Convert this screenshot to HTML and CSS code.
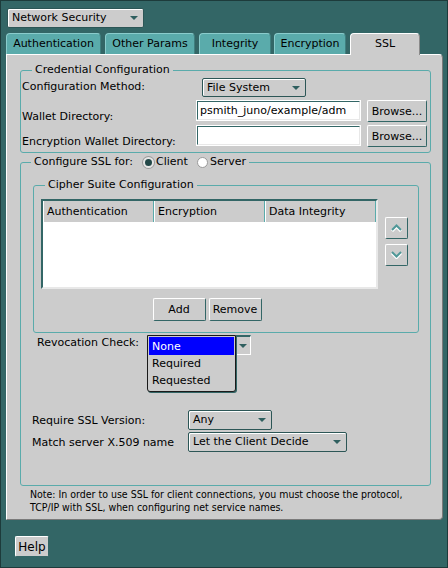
FILE: index.html
```html
<!DOCTYPE html>
<html lang="en">
<head>
<meta charset="UTF-8">
<title>Network Security - SSL</title>
<link rel="stylesheet" href="styles.css">
</head>
<body>
<div class="window">
  <div class="combo combo-main">Network Security<span class="arrow"></span></div>

  <div class="tabs">
    <div class="tab tab-auth">Authentication</div>
    <div class="tab tab-params">Other Params</div>
    <div class="tab tab-integrity">Integrity</div>
    <div class="tab tab-encryption">Encryption</div>
    <div class="tab tab-ssl selected">SSL</div>
  </div>

  <div class="panel">
    <fieldset class="group cred">
      <legend>Credential Configuration</legend>
      <div class="cred-grid">
        <span class="label label-method">Configuration Method:</span>
        <div class="combo combo-method">File System<span class="arrow"></span></div>
        <span></span>

        <span class="label label-low">Wallet Directory:</span>
        <div class="field">psmith_juno/example/adm</div>
        <button class="btn btn-browse">Browse...</button>

        <span class="label label-low">Encryption Wallet Directory:</span>
        <div class="field"></div>
        <button class="btn btn-browse">Browse...</button>
      </div>
    </fieldset>

    <fieldset class="group ssl">
      <legend>Configure SSL for:<span class="radio checked"></span>Client<span class="radio"></span>Server</legend>

      <fieldset class="group cipher">
        <legend>Cipher Suite Configuration</legend>
        <div class="cipher-body">
          <div class="cipher-main">
            <div class="table">
              <div class="thead">
                <div class="th">Authentication</div>
                <div class="th">Encryption</div>
                <div class="th">Data Integrity</div>
              </div>
            </div>
            <div class="table-actions">
              <button class="btn btn-add">Add</button>
              <button class="btn btn-add">Remove</button>
            </div>
          </div>
          <div class="order-btns">
            <button class="btn btn-order">
              <svg width="13" height="8" viewBox="0 0 13 8"><polyline points="2,7 6.5,2.5 11,7" fill="none" stroke="#fff" stroke-width="3"/><polyline points="2,6 6.5,1.5 11,6" fill="none" stroke="#4f9797" stroke-width="2"/></svg>
            </button>
            <button class="btn btn-order">
              <svg width="13" height="8" viewBox="0 0 13 8"><polyline points="2,2 6.5,6.5 11,2" fill="none" stroke="#fff" stroke-width="3"/><polyline points="2,1 6.5,5.5 11,1" fill="none" stroke="#4f9797" stroke-width="2"/></svg>
            </button>
          </div>
        </div>
      </fieldset>

      <div class="revocation">
        <span class="label label-revoke">Revocation Check:</span>
        <div class="combo-open">
          <div class="popup">
            <div class="option active">None</div>
            <div class="option">Required</div>
            <div class="option">Requested</div>
          </div>
          <span class="arrow-box"><span class="arrow"></span></span>
        </div>
      </div>

      <div class="ver-row first">
        <span class="label label-ver">Require SSL Version:</span>
        <div class="combo combo-any">Any<span class="arrow"></span></div>
      </div>
      <div class="ver-row">
        <span class="label label-ver">Match server X.509 name</span>
        <div class="combo combo-match">Let the Client Decide<span class="arrow"></span></div>
      </div>
    </fieldset>

    <p class="note">Note: In order to use SSL for client connections, you must choose the protocol,<br>TCP/IP with SSL, when configuring net service names.</p>
  </div>

  <button class="btn btn-help">Help</button>
</div>
</body>
</html>
```

FILE: styles.css
```css
* {
  box-sizing: border-box;
}

body {
  margin: 0;
  font-family: "DejaVu Sans", sans-serif;
  font-size: 11px;
  color: #000;
}

.window {
  width: 448px;
  height: 568px;
  background: #336666;
  border: 1px solid #1d3b3b;
  display: flex;
  flex-direction: column;
  align-items: flex-start;
}

/* combo boxes */
.combo {
  display: flex;
  align-items: center;
  background: #cccccc;
  border: 1px solid #2c5656;
  border-radius: 2px;
  box-shadow: inset 1px 1px 0 #fff;
  padding-left: 4px;
  height: 20px;
  line-height: 14px;
}

.combo .arrow {
  margin-left: auto;
  margin-right: 5px;
}

.arrow {
  width: 0;
  height: 0;
  border-left: 4px solid transparent;
  border-right: 4px solid transparent;
  border-top: 4px solid #2f5f5f;
}

.combo-main {
  margin: 7px 0 0 6px;
  width: 137px;
}

/* tabs */
.tabs {
  display: flex;
  gap: 4px;
  margin: 5px 0 0 5px;
  position: relative;
  z-index: 1;
}

.tab {
  height: 21px;
  line-height: 20px;
  background: #5aabab;
  border-top: 1px solid #8acccc;
  border-left: 1px solid #8acccc;
  border-right: 1px solid #3f7f7f;
  border-radius: 4px 4px 0 0;
  text-align: center;
}

.tab-auth { width: 95px; }
.tab-params { width: 90px; }
.tab-integrity { width: 72px; margin-right: -1px; }
.tab-encryption { width: 72px; }
.tab-ssl { width: 70px; }

.tab.selected {
  background: #cccccc;
  border-top-color: #fff;
  border-left-color: #fff;
  border-right-color: #8a8a8a;
  height: 22px;
  margin-bottom: -1px;
}

/* main panel */
.panel {
  margin-left: 5px;
  width: 437px;
  height: 466px;
  background: #cccccc;
  border-top: 1px solid #fff;
  border-left: 1px solid #fff;
  border-right: 1px solid #7a7a7a;
  border-bottom: 1px solid #7a7a7a;
  border-radius: 0 4px 4px 0;
  padding: 8px 11px 0 13px;
}

.group {
  margin: 0;
  border: 1px solid #5aabab;
  border-radius: 3px;
  padding: 0;
  min-width: 0;
}

.group legend {
  padding: 0 3px;
  line-height: 14px;
  height: 14px;
  display: flex;
  align-items: center;
}

.label {
  white-space: nowrap;
}

/* credential configuration */
.cred {
  padding: 0 1px 5px 1px;
}

.cred legend {
  margin-left: 10px;
}

.cred-grid {
  display: grid;
  grid-template-columns: 175px 170px 60px;
  row-gap: 4px;
  margin-top: 1px;
}

.label-method {
  align-self: center;
  margin-top: -3px;
}

.label-low {
  align-self: end;
  line-height: 14px;
  margin-bottom: -2px;
}

.combo-method {
  margin-left: 5px;
  width: 104px;
  height: 19px;
}

.field {
  width: 163px;
  height: 19px;
  background: #fff;
  border-top: 1px solid #336666;
  border-left: 1px solid #336666;
  border-right: 1px solid #e8e8e8;
  border-bottom: 1px solid #e8e8e8;
  box-shadow: 0 0 0 1px #fff;
  padding-left: 2px;
  line-height: 17px;
  overflow: hidden;
  white-space: nowrap;
  align-self: start;
}

/* buttons */
.btn {
  font-family: "DejaVu Sans", sans-serif;
  font-size: 11px;
  color: #000;
  background: #cccccc;
  border-top: 1px solid #fff;
  border-left: 1px solid #fff;
  border-right: 1px solid #336666;
  border-bottom: 1px solid #336666;
  border-radius: 2px;
  padding: 0;
  height: 22px;
  margin: 0;
}

.btn-browse {
  width: 60px;
  margin-top: -1px;
}

/* ssl group */
.ssl {
  margin-top: 2px;
  padding: 0 11px 33px 12px;
}

.ssl > legend {
  margin-left: -2px;
}

.radio {
  display: inline-block;
  width: 11px;
  height: 11px;
  border-radius: 50%;
  background: #fff;
  border: 1px solid #9a9a9a;
  margin: 0 2px 0 9px;
}

.radio.checked {
  background: #234848;
  border: 2px solid #e6e6e6;
  box-shadow: 0 0 0 1px #9a9a9a;
  margin-left: 10px;
}

.cipher {
  margin-top: 9px;
  padding: 0 11px 11px 7px;
}

.cipher legend {
  margin-left: 4px;
}

.cipher-body {
  display: flex;
  gap: 7px;
  margin-top: 7px;
}

.cipher-main {
  flex: 1;
}

.table {
  height: 90px;
  background: #fff;
  border-top: 2px solid #336666;
  border-left: 2px solid #336666;
  border-right: 2px solid #e8e8e8;
  border-bottom: 2px solid #e8e8e8;
}

.thead {
  display: flex;
  height: 21px;
  background: #cccccc;
}

.th {
  width: 111px;
  padding-left: 3px;
  line-height: 21px;
  border-right: 1px solid #5aabab;
  border-left: 1px solid #fff;
}

.table-actions {
  display: flex;
  justify-content: center;
  gap: 3px;
  margin-top: 9px;
  padding-right: 5px;
}

.btn-add {
  width: 53px;
  height: 23px;
}

.order-btns {
  display: flex;
  flex-direction: column;
  gap: 5px;
  padding-top: 18px;
}

.btn-order {
  width: 23px;
  height: 22px;
  display: flex;
  align-items: center;
  justify-content: center;
}

/* revocation */
.revocation {
  display: flex;
  align-items: flex-start;
  margin-top: 2px;
  height: 20px;
}

.label-revoke {
  width: 110px;
  margin-left: 4px;
  margin-top: 1px;
}

.combo-open {
  display: flex;
  position: relative;
  width: 104px;
  height: 20px;
}

.popup {
  position: absolute;
  left: 0;
  top: 0;
  width: 89px;
  background: #cccccc;
  border: 1px solid #1a1a1a;
  border-radius: 0 0 3px 3px;
  box-shadow: 1px 1px 0 #336666;
  padding: 1px 1px 2px 1px;
  z-index: 2;
}

.option {
  height: 17px;
  line-height: 17px;
  padding-left: 3px;
}

.option.active {
  background: #0000ff;
  color: #fff;
  height: 18px;
  line-height: 19px;
}

.arrow-box {
  margin-left: 89px;
  width: 15px;
  height: 20px;
  display: flex;
  align-items: center;
  justify-content: center;
  border-top: 2px solid #336666;
  border-right: 1px solid #fff;
  border-bottom: 1px solid #fff;
  background: #cccccc;
}

.ver-row {
  display: flex;
  align-items: center;
}

.ver-row.first {
  margin-top: 55px;
}

.ver-row + .ver-row {
  margin-top: 2px;
}

.label-ver {
  width: 156px;
  margin-left: -1px;
}

.combo-any {
  width: 84px;
}

.combo-match {
  width: 159px;
}

/* note + help */
.note {
  margin: 2px 0 0 10px;
  font-family: "DejaVu Sans Condensed", "DejaVu Sans", sans-serif;
  font-stretch: condensed;
  font-size: 10.5px;
  line-height: 13px;
}

.btn-help {
  margin: 16px 0 0 14px;
  width: 34px;
  height: 21px;
  font-size: 12px;
}
```
